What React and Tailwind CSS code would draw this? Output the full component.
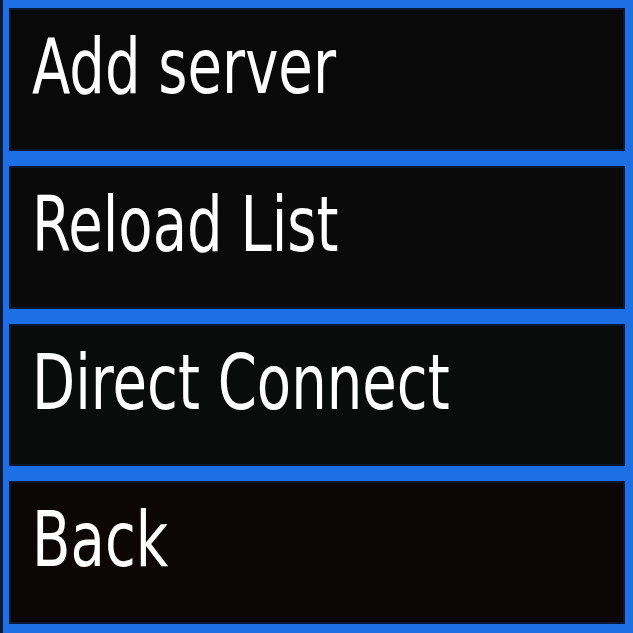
import React from 'react';

const items = [
  { label: 'Add server', bg: 'bg-[#090909]' },
  { label: 'Reload List', bg: 'bg-[#0a0a0a]' },
  { label: 'Direct Connect', bg: 'bg-[#0a0b0b]' },
  { label: 'Back', bg: 'bg-[#0c0706]' },
];

const App = () => {
  return (
    <div className="w-[633px] h-[633px] bg-[#1d6fe6] border-l-[3px] border-l-[#0b1a36] flex flex-col gap-[15px] pt-[8px] pb-[9px] pl-[6px] pr-[8px] overflow-hidden">
      {items.map((item) => (
        <div
          key={item.label}
          className={`flex-1 ${item.bg} border-2 border-[#0b1833] pt-[18px] pl-[21px]`}
        >
          <span
            className="inline-block origin-left scale-x-[0.81] text-white text-[77px] leading-none whitespace-nowrap"
            style={{ fontFamily: '"DejaVu Sans Condensed", "DejaVu Sans", sans-serif' }}
          >
            {item.label}
          </span>
        </div>
      ))}
    </div>
  );
};

export default App;
